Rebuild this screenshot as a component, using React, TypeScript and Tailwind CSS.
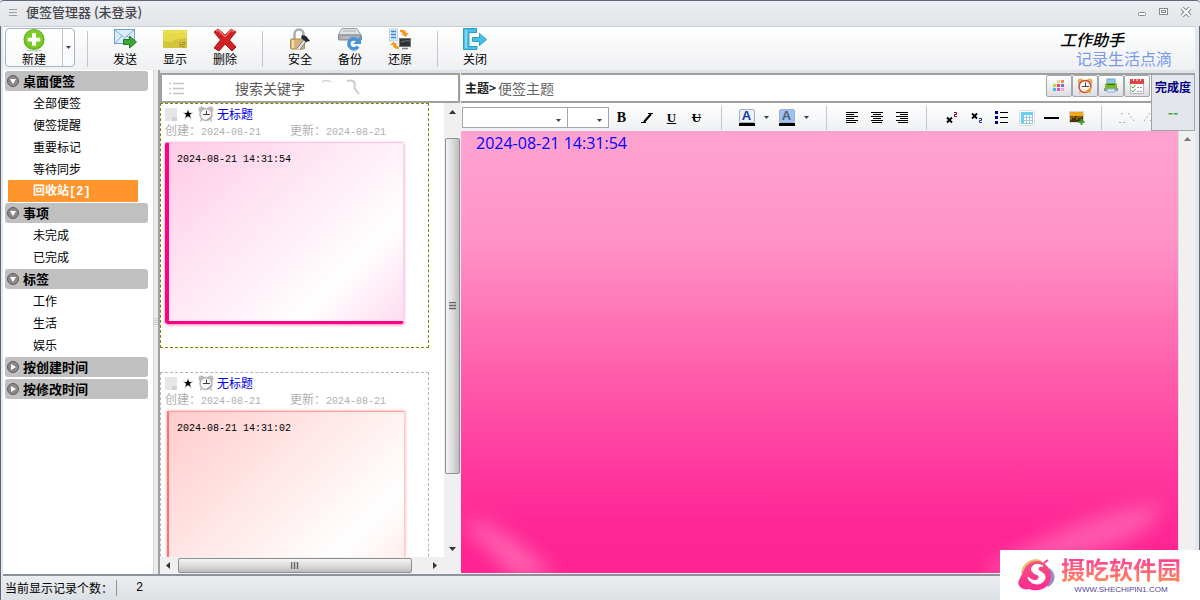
import type { ReactNode } from 'react';

const SIDEBAR = [
  { title: '桌面便签', open: true, items: ['全部便签', '便签提醒', '重要标记', '等待同步', '回收站[2]'] },
  { title: '事项', open: true, items: ['未完成', '已完成'] },
  { title: '标签', open: true, items: ['工作', '生活', '娱乐'] },
  { title: '按创建时间', open: false, items: [] },
  { title: '按修改时间', open: false, items: [] },
];

const NOTES = [
  { time: '2024-08-21 14:31:54', date: '2024-08-21', selected: true },
  { time: '2024-08-21 14:31:02', date: '2024-08-21', selected: false },
];

/* ---------- toolbar icons ---------- */

function AddIcon() {
  return (
    <svg width="24" height="24" viewBox="0 0 24 24">
      <ellipse cx="12" cy="22.500" rx="9" ry="1" fill="#c9ccd0" />
      <circle cx="12" cy="11" r="11" fill="#62b81c" />
      <circle cx="12" cy="10.500" r="9.500" fill="#7ccb2a" />
      <path d="M12 4.500v13M5.500 11h13" stroke="#fff" strokeWidth="4" />
    </svg>
  );
}

function SendIcon() {
  return (
    <svg width="24" height="24" viewBox="0 0 24 24">
      <rect x="1.500" y="1.500" width="20" height="14" fill="#d9ecfb" stroke="#6b9fd6" />
      <path d="M2 2l9.500 8L21 2M2 15l7-7M21 15l-7-7" fill="none" stroke="#7fb0de" />
      <path d="M10.500 11.500h6v-3.500l7 6-7 6v-3.500h-6z" fill="#3fa535" stroke="#1f7a20" />
    </svg>
  );
}

function ShowIcon() {
  return (
    <svg width="24" height="24" viewBox="0 0 24 24">
      <rect y="2" width="24" height="18" fill="#e6da48" />
      <path d="M0 13l8 1 6-3 10-1v10H0z" fill="#d3c43e" />
      <path d="M1 4h22" stroke="#f3ec86" strokeDasharray="2 2" />
      <path d="M17 19v-5M19 14.500h3v2h-3v2.500h3" fill="none" stroke="#a08d26" />
    </svg>
  );
}

function DeleteIcon() {
  return (
    <svg width="24" height="24" viewBox="0 0 24 24">
      <path d="M1 4l4-3 7 6 6-6 5 3-6.500 8 6.500 7-4 4-7-7-6 7-5-3 6.500-8z" fill="#d02222" stroke="#a51717" strokeLinejoin="round" />
      <path d="M3 3.500l2-1.500 7 6.500 6-6.500 3 1.500" fill="none" stroke="#ee7672" strokeWidth="1.500" />
    </svg>
  );
}

function LockIcon() {
  return (
    <svg width="24" height="24" viewBox="0 0 24 24">
      <path d="M6.500 12V6a4.500 4.500 0 0 1 9 0v6" fill="none" stroke="#a9adb2" strokeWidth="2.500" />
      <rect x="2.500" y="11" width="14" height="10" rx="1" fill="#d9b277" stroke="#b28a4e" />
      <path d="M5 12v8" stroke="#f2dcb4" strokeWidth="2" />
      <path d="M10 21l8-10" stroke="#dfe3e6" strokeWidth="4" />
      <path d="M9 20l8-10M12 22l7-10" stroke="#6b6f73" />
      <path d="M14 7l4 1 4 5-4 1-5-4z" fill="#25282b" />
    </svg>
  );
}

function BackupIcon() {
  return (
    <svg width="24" height="24" viewBox="0 0 24 24">
      <path d="M4 .5h15l4 6.500H0z" fill="#dfe2e5" stroke="#999ea3" />
      <rect x=".5" y="7" width="23" height="5" rx="1" fill="#a9aeb3" stroke="#858a90" />
      <path d="M5 3h13M3 9.500h9" stroke="#b9bec3" strokeWidth="1.500" />
      <path d="M20 18.500a5 5 0 1 1-1-6.500" fill="none" stroke="#4a94d8" strokeWidth="3.500" />
      <path d="M23 8v8h-8z" fill="#4a94d8" />
    </svg>
  );
}

function RestoreIcon() {
  return (
    <svg width="24" height="24" viewBox="0 0 24 24">
      <rect x="1.500" y="1" width="8" height="12" fill="#d7e8f8" stroke="#bcd2e8" />
      <path d="M3 3.500h5M3 6.500h5M3 9.500h5" stroke="#4587c4" strokeWidth="1.500" />
      <path d="M12 2q6-1 6 3h2.500L18 9l-5-3h2q-1-2-3-2z" fill="#f59a1b" />
      <path d="M11 21q-6 0-6-4H2l3-3 5 2H8q0 2 3 3z" fill="#f59a1b" />
      <rect x="11.500" y="10.500" width="11" height="8" fill="#2e3135" stroke="#6f757b" />
      <path d="M13 14q5-2 9-1" stroke="#73797f" fill="none" />
      <path d="M14 20.500h6" stroke="#7c8186" strokeWidth="1.500" />
    </svg>
  );
}

function ExitIcon() {
  return (
    <svg width="24" height="24" viewBox="0 0 24 24">
      <path d="M.5.5h13v4H6v14h8v3H.5z" fill="#48bfe3" stroke="#2ba0c6" />
      <path d="M2 2h2v18H2z" fill="#7ddaf2" />
      <path d="M9.500 9.500h7V5.500l7 6-7 6v-4h-7z" fill="#48bfe3" stroke="#2ba0c6" />
    </svg>
  );
}

const TOOLS: { label: string; icon: ReactNode; divider?: boolean }[] = [
  { label: '发送', icon: <SendIcon /> },
  { label: '显示', icon: <ShowIcon /> },
  { label: '删除', icon: <DeleteIcon />, divider: true },
  { label: '安全', icon: <LockIcon /> },
  { label: '备份', icon: <BackupIcon /> },
  { label: '还原', icon: <RestoreIcon />, divider: true },
  { label: '关闭', icon: <ExitIcon /> },
];

/* ---------- small drawings ---------- */

function Caret({ className = '' }: { className?: string }) {
  return (
    <svg width="5" height="3" viewBox="0 0 5 3" className={className}>
      <path d="M0 0h5L2.500 3z" fill="#3c4046" />
    </svg>
  );
}

function AlarmIcon({ gray = false }: { gray?: boolean }) {
  const bell = gray ? '#bdbdbd' : '#e0b45a';
  const ring = gray ? '#b5b5b5' : '#cf4a36';
  return (
    <svg width="16" height="16" viewBox="0 0 16 16">
      <circle cx="3.500" cy="3.500" r="3" fill={bell} />
      <circle cx="12.500" cy="3.500" r="3" fill={bell} />
      <path d="M3.500 13l-1 2.500M12.500 13l1 2.500" stroke={bell} strokeWidth="1.500" />
      <circle cx="8" cy="8.500" r="6" fill="#f7f7f7" stroke={ring} strokeWidth="1.500" />
      <path d="M8.500 4.500v4.500M5 8.500h7" fill="none" stroke="#444" />
      <path d="M9 14l5-4" stroke={gray ? '#888' : '#e8a825'} strokeWidth={gray ? 1 : 2} />
    </svg>
  );
}

function PaletteIcon() {
  return (
    <svg width="16" height="16" viewBox="0 0 16 16">
      <path d="M6 2h3v3H6z" fill="#f0cf9e" />
      <path d="M10 2h3v3h-3z" fill="#e8924c" />
      <path d="M2 6h3v3H2z" fill="#b6d84c" />
      <path d="M6 6h3v3H6z" fill="#ee4a5c" />
      <path d="M10 6h3v3h-3z" fill="#7470e0" />
      <path d="M2 10h3v3H2z" fill="#3fb4f0" />
      <path d="M6 10h3v3H6z" fill="#d455e0" />
      <path d="M10 10h3v3h-3z" fill="#f2a8cc" />
    </svg>
  );
}

function PrinterIcon() {
  return (
    <svg width="16" height="16" viewBox="0 0 16 16">
      <rect x="4" y="1" width="8" height="5" fill="#8ec6f0" stroke="#6aa7d8" />
      <rect x="2" y="5" width="12" height="6" rx="2" fill="#7db52b" />
      <path d="M4 6.500h8" stroke="#3e6d14" />
      <path d="M1 10h14v3H1z" fill="#8f979e" />
      <path d="M2 8h12v3H2z" fill="#7db52b" />
      <path d="M4 11h8v3H4z" fill="#dceefb" stroke="#86b5da" />
    </svg>
  );
}

function CalendarIcon() {
  return (
    <svg width="16" height="16" viewBox="0 0 16 16">
      <rect x="1.500" y="1.500" width="13" height="14" fill="#fff" stroke="#b9b9b9" />
      <path d="M1 1h14v5H1z" fill="#e04545" />
      <path d="M4.500 0v3M8 0v3M11.500 0v3" stroke="#fff" />
      <path d="M2.500 8.500l1.500 1.500 2.500-3M2.500 12.500L4 14l2.500-3" fill="none" stroke="#36a336" />
      <path d="M8 9.500h5M8 13.500h5" stroke="#999" strokeDasharray="2 1" />
    </svg>
  );
}

function Lines({ x }: { x: number[] }) {
  return (
    <svg width="12" height="12" viewBox="0 0 12 12">
      {[12, 8, 12, 8, 12, 10].map((w, i) => (
        <rect key={i} x={x[i]} y={i * 2} width={w} height="1" fill="#000" />
      ))}
    </svg>
  );
}

function LetterBox({ className }: { className: string }) {
  return (
    <span className="block w-4 border-b-[3px] border-black">
      <span className={`block rounded-[2px] border border-[#9fb0c6] text-center font-[Liberation_Sans,sans-serif] text-[13px] leading-3 font-bold ${className}`}>
        A
      </span>
    </span>
  );
}

function Script({ sup }: { sup: boolean }) {
  return (
    <svg width="12" height="12" viewBox="0 0 12 12">
      <path d={sup ? 'M1 5.500l5 5M6 5.500l-5 5' : 'M1 1.500l5 5M6 1.500l-5 5'} stroke="#000" strokeWidth="1.800" />
      <path d={sup ? 'M8 .5h2.500v2h-2v2H11' : 'M8 6.500h2.500v2h-2v2H11'} fill="none" stroke={sup ? '#8b0020' : '#1c2fae'} />
    </svg>
  );
}

function BulletIcon() {
  return (
    <svg width="14" height="14" viewBox="0 0 14 14">
      <path d="M0 0h3v3H0zM0 5h3v3H0zM0 10h3v3H0z" fill="#000080" />
      <path d="M5 1.500h8M5 6.500h8M5 11.500h8" stroke="#000" />
    </svg>
  );
}

function TableIcon() {
  return (
    <svg width="16" height="16" viewBox="0 0 16 16">
      <rect x=".5" y=".5" width="15" height="15" rx="1" fill="#fff" stroke="#d3dde3" />
      <path d="M2 2h12v3H2zM2 5h3v9H2z" fill="#67d0f3" />
      <path d="M5 7.500h9M5 10.500h9M2 13.500h12M7.500 5v9M10.500 5v9M13.500 5v9" stroke="#9fc5d8" />
    </svg>
  );
}

function PictureIcon() {
  return (
    <svg width="16" height="16" viewBox="0 0 16 16">
      <rect x=".5" y="1.500" width="14" height="11" fill="#4b3310" stroke="#d5d5d5" />
      <path d="M1 2h13v4H1z" fill="#f3a51c" />
      <path d="M2 10V7h4M8 10V7h5" fill="none" stroke="#c08a1c" />
      <path d="M12.500 9v6M9.500 12h6" stroke="#3ca02b" strokeWidth="2" />
    </svg>
  );
}

function Fmt({ label, children }: { label: string; children: ReactNode }) {
  return (
    <button type="button" aria-label={label} className="flex h-6 w-[25px] shrink-0 items-center justify-center">
      {children}
    </button>
  );
}

function Divider({ className = 'h-6' }: { className?: string }) {
  return (
    <div className="flex w-[25px] shrink-0 items-center justify-center">
      <div className={`w-px bg-[#c3c7cd] ${className}`}></div>
    </div>
  );
}

/* ---------- frame ---------- */

function TitleBar() {
  return (
    <header className="flex h-[26px] shrink-0 items-center rounded-t border-t border-[#5f6a78] bg-linear-to-b from-[#eceef1] to-[#e2e5e9] pr-2 pb-[3px] pl-[9px]">
      <svg width="8" height="7" viewBox="0 0 8 7" className="mr-[9px]">
        <path d="M0 .5h8M0 3.500h8M0 6.500h8" stroke="#9a9da1" />
      </svg>
      <h1 className="flex-1 text-[13px] leading-5 font-medium text-[#44464b]">便签管理器 (未登录)</h1>
      <div className="flex items-center gap-3">
        <button type="button" aria-label="最小化">
          <svg width="9" height="9" viewBox="0 0 9 9"><rect x=".5" y="4.500" width="7" height="3" rx="1" fill="#fff" stroke="#85888c" /></svg>
        </button>
        <button type="button" aria-label="最大化">
          <svg width="9" height="8" viewBox="0 0 9 8"><rect x=".5" y=".5" width="8" height="6" fill="#fff" stroke="#85888c" /><rect x="2.500" y="2.500" width="4" height="2" fill="#fff" stroke="#85888c" /></svg>
        </button>
        <button type="button" aria-label="关闭窗口">
          <svg width="12" height="10" viewBox="0 0 12 10"><path d="M2 1l8 8M10 1L2 9" stroke="#85888c" strokeWidth="4" /><path d="M2 1l8 8M10 1L2 9" stroke="#fff" strokeWidth="2" /></svg>
        </button>
      </div>
    </header>
  );
}

function Toolbar() {
  return (
    <div className="flex h-11 shrink-0 border-t border-[#c9ced4] bg-linear-to-b from-white to-[#eff0f2] pl-0.5">
      <div className="mt-px flex h-[39px] w-[70px] rounded-sm border border-[#a7b4c6] bg-white/50">
        <button type="button" className="flex w-[57px] flex-col items-center border-r border-[#b9c3d0] text-xs leading-[14px]">
          <AddIcon />
          新建
        </button>
        <button type="button" aria-label="新建选项" className="flex flex-1 items-center justify-center">
          <Caret />
        </button>
      </div>
      <Divider className="h-9" />
      {TOOLS.map((tool) => (
        <div key={tool.label} className="flex">
          <button type="button" className="flex w-[50px] flex-col items-center pt-px text-xs leading-[14px]">
            {tool.icon}
            {tool.label}
          </button>
          {tool.divider && <Divider className="h-9" />}
        </div>
      ))}
      <div className="flex-1"></div>
      <div className="mr-[23px] flex flex-col pt-1 font-[Liberation_Sans,Noto_Sans_CJK_SC,sans-serif]">
        <span className="-ml-4 text-base leading-[19px] font-medium text-black italic">工作助手</span>
        <span className="text-base leading-[19px] text-[#7b9be8]">记录生活点滴</span>
      </div>
    </div>
  );
}

function Sidebar() {
  return (
    <nav className="w-[150px] shrink-0 bg-white">
      {SIDEBAR.map((group) => (
        <section key={group.title} className="flex flex-col">
          <button type="button" className="my-px ml-0.5 flex h-5 w-[143px] items-center rounded-[3px] bg-[#c0c0c0] pl-0.5 text-[13px] font-bold">
            <svg width="12" height="12" viewBox="0 0 12 12" className="mr-1 shrink-0">
              <circle cx="6" cy="6" r="5.500" fill="#8a8a8a" stroke="#5d5d5d" />
              <path d={group.open ? 'M3 4h6L6 9z' : 'M4 3v6l5-3z'} fill="#fff" />
            </svg>
            {group.title}
          </button>
          {group.items.map((item) =>
            item.startsWith('回收站') ? (
              <a key={item} href="#" className="ml-[5px] block h-[22px] w-[130px] bg-[#ff962d] pl-[25px] font-[Liberation_Mono,Noto_Sans_CJK_SC,monospace] text-xs leading-6 font-bold text-white">
                {item}
              </a>
            ) : (
              <a key={item} href="#" className="ml-[5px] block h-[22px] w-[130px] pl-[25px] text-xs leading-[22px]">
                {item}
              </a>
            )
          )}
        </section>
      ))}
    </nav>
  );
}

function NoteCard({ note }: { note: (typeof NOTES)[number] }) {
  return (
    <article className={`h-[245px] w-[269px] shrink-0 border border-dashed pl-1 ${note.selected ? 'border-[#808000]' : 'border-[#b4b4b4]'}`}>
      <div className="flex h-5 items-center text-xs">
        <svg width="13" height="13" viewBox="0 0 13 13" className="mr-1">
          <rect width="12" height="13" fill="#e6e6e6" />
          <path d="M7 9h5v4H7z" fill="#d2d2d2" />
        </svg>
        <svg width="12" height="12" viewBox="0 0 11 11" className="mr-1">
          <path d="M5.500 0l1.300 4H11L7.700 6.500 9 11 5.500 8.300 2 11l1.300-4.500L0 4h4.200z" fill="#cfcfcf" />
          <path d="M5.500 2l1 2.500H9L7 6.300 8 9 5.500 7.300 3 9l1-2.700-2-1.800h2.500z" fill="#000" />
        </svg>
        <AlarmIcon gray />
        <a href="#" className="ml-[3px] text-[#0000e6]">无标题</a>
      </div>
      <div className="flex h-[13px] items-center text-xs leading-[13px] text-[#b0b0b0]">
        <span className="w-[125px]">创建：<span className="font-[Liberation_Mono,monospace] text-[10px]">{note.date}</span></span>
        <span>更新：<span className="font-[Liberation_Mono,monospace] text-[10px]">{note.date}</span></span>
      </div>
      {note.selected ? (
        <div className="mt-[5px] h-[182px] w-[239px] rounded-[3px] border-t border-r border-b-[3px] border-l-4 border-[#ff0080] border-t-[#ffc4e2] border-r-[#ffd0e8] bg-linear-135 from-[#ffcbe6] via-white via-75% to-[#ffdcef] px-2 py-[9px] font-[Liberation_Mono,monospace] text-[10px] shadow-[0_1px_3px_#ff7dbe]">
          {note.time}
        </div>
      ) : (
        <div className="mt-[5px] ml-0.5 h-[182px] w-[238px] border border-l-2 border-[#ff9c9c] border-r-[#ffc8c8] border-l-[#ff7070] bg-linear-135 from-[#ffcccc] via-white via-75% to-[#ffe4e4] px-2 py-[9px] font-[Liberation_Mono,monospace] text-[10px] shadow-[0_0_3px_#ff9a9a]">
          {note.time}
        </div>
      )}
    </article>
  );
}

function NoteList() {
  return (
    <section className="flex w-[300px] shrink-0 flex-col bg-[#f0f0f0]">
      <div className="flex h-[30px] shrink-0 items-center border-2 border-[#a0a0a0] bg-white">
        <svg width="15" height="13" viewBox="0 0 15 13" className="ml-[7px]">
          <path d="M0 1.500h2M0 6.500h2M0 11.500h2M4 1.500h11M4 6.500h11M4 11.500h11" stroke="#c4c4c4" strokeWidth="1.500" />
        </svg>
        <input aria-label="搜索" placeholder="搜索关键字" className="ml-[51px] w-20 text-sm outline-none placeholder:text-[#5a5a5a]" />
        <svg width="42" height="18" viewBox="0 0 42 18" className="ml-1.5">
          <path d="M1 3q5-3 9 0" fill="none" stroke="#d0d0d0" strokeWidth="1.500" />
          <path d="M26 2q7-2 8 3-1 4 0 5l4 5" fill="none" stroke="#cdcdcd" strokeWidth="2" />
        </svg>
      </div>
      <div className="flex min-h-0 flex-1">
        <div className="flex min-w-0 flex-1 flex-col">
          <div className="flex min-h-0 flex-1 flex-col gap-6 overflow-hidden bg-white">
            {NOTES.map((note) => <NoteCard key={note.time} note={note} />)}
          </div>
          <div className="flex h-[17px] shrink-0 items-center">
            <svg width="18" height="7" viewBox="0 0 18 7" className="shrink-0"><path d="M10 0v7L6 3.500z" fill="#333" /></svg>
            <div className="flex h-[15px] w-[234px] items-center justify-center rounded-[2px] border border-[#8f8f8f] bg-linear-to-b from-[#f4f4f4] via-[#dcdcdc] to-[#bdbdbd]">
              <svg width="8" height="7" viewBox="0 0 8 7"><path d="M.5 0v7M3.500 0v7M6.500 0v7" stroke="#666" strokeWidth="1.500" /></svg>
            </div>
            <svg width="18" height="7" viewBox="0 0 18 7" className="ml-3 shrink-0"><path d="M9 0v7l4-3.500z" fill="#333" /></svg>
          </div>
        </div>
        <div className="flex w-4 shrink-0 flex-col items-center">
          <svg width="7" height="35" viewBox="0 0 7 35" className="shrink-0"><path d="M0 11h7L3.500 7z" fill="#333" /></svg>
          <div className="flex h-[336px] w-[15px] items-center justify-center rounded-[2px] border border-[#8f8f8f] bg-linear-to-r from-[#f4f4f4] via-[#dcdcdc] to-[#bdbdbd]">
            <svg width="7" height="8" viewBox="0 0 7 8"><path d="M0 .5h7M0 3.500h7M0 6.500h7" stroke="#666" strokeWidth="1.500" /></svg>
          </div>
          <div className="flex-1"></div>
          <svg width="7" height="30" viewBox="0 0 7 30" className="shrink-0"><path d="M0 3h7L3.500 7z" fill="#333" /></svg>
        </div>
      </div>
    </section>
  );
}

function FormatBar() {
  return (
    <div className="flex h-7 shrink-0 items-center overflow-hidden bg-linear-to-b from-white to-[#eef0f2] pt-px pl-px">
      {[
        { label: '字体', cls: 'w-[106px]' },
        { label: '字号', cls: 'w-[42px]' },
      ].map((box) => (
        <div key={box.label} className={`-ml-px grid h-[21px] shrink-0 items-center border border-[#a3a7ac] bg-white first:ml-0 ${box.cls}`}>
          <select aria-label={box.label} className="col-start-1 row-start-1 h-full w-full appearance-none outline-none"></select>
          <Caret className="col-start-1 row-start-1 mr-1.5 justify-self-end" />
        </div>
      ))}
      <Fmt label="粗体"><b className="font-[Liberation_Serif,serif] text-sm">B</b></Fmt>
      <Fmt label="斜体">
        <svg width="12" height="10" viewBox="0 0 12 10"><path d="M7 .5h5M0 9.500h5" stroke="#000" /><path d="M10 1L3 9" stroke="#000" strokeWidth="2" /></svg>
      </Fmt>
      <Fmt label="下划线"><span className="font-[Liberation_Serif,serif] text-[13px] font-bold underline">U</span></Fmt>
      <Fmt label="删除线"><span className="font-[Liberation_Serif,serif] text-[13px] font-bold line-through">U</span></Fmt>
      <Divider />
      <Fmt label="文字颜色"><LetterBox className="bg-[#f0f1f4] text-[#0a3ca8]" /></Fmt>
      <button type="button" aria-label="更多文字颜色" className="flex w-[15px] shrink-0 justify-center"><Caret /></button>
      <Fmt label="背景颜色"><LetterBox className="bg-[#9cc3f3] text-[#55606e]" /></Fmt>
      <button type="button" aria-label="更多背景颜色" className="flex w-[15px] shrink-0 justify-center"><Caret /></button>
      <Divider />
      <Fmt label="左对齐"><Lines x={[0, 0, 0, 0, 0, 0]} /></Fmt>
      <Fmt label="居中"><Lines x={[0, 2, 0, 2, 0, 1]} /></Fmt>
      <Fmt label="右对齐"><Lines x={[0, 4, 0, 4, 0, 2]} /></Fmt>
      <Divider />
      <Fmt label="上标"><Script sup /></Fmt>
      <Fmt label="下标"><Script sup={false} /></Fmt>
      <Fmt label="列表"><BulletIcon /></Fmt>
      <Fmt label="表格"><TableIcon /></Fmt>
      <Fmt label="分隔线"><svg width="15" height="2"><path d="M0 1h15" stroke="#000" strokeWidth="2" /></svg></Fmt>
      <Fmt label="图片"><PictureIcon /></Fmt>
      <Divider />
      <Fmt label="撤销">
        <svg width="16" height="12" viewBox="0 0 16 12"><path d="M0 10.500h6M2 2l4-1M9 1l6 8" stroke="#aaa" strokeDasharray="2 2" fill="none" /></svg>
      </Fmt>
      <Fmt label="重做">
        <svg width="16" height="12" viewBox="0 0 16 12"><path d="M0 9l6-8M6 9l4-4" stroke="#aaa" strokeDasharray="2 2" fill="none" /></svg>
      </Fmt>
    </div>
  );
}

function Editor() {
  const actions = [
    { label: '颜色', icon: <PaletteIcon /> },
    { label: '提醒', icon: <AlarmIcon /> },
    { label: '打印', icon: <PrinterIcon /> },
    { label: '日程', icon: <CalendarIcon /> },
  ];
  return (
    <section className="flex min-w-0 flex-1 flex-col bg-[#f0f0f0] pl-px">
      <div className="flex h-[58px] shrink-0">
        <div className="flex min-w-0 flex-1 flex-col">
          <div className="flex h-[30px] shrink-0 items-center border-y-2 border-[#a0a0a0] bg-white pr-px pl-1">
            <label htmlFor="topic" className="mr-0.5 text-xs font-bold text-[#222]">主题&gt;</label>
            <input id="topic" placeholder="便签主题" className="min-w-0 flex-1 text-sm outline-none placeholder:text-[#666]" />
            <div className="flex self-start">
              {actions.map((action) => (
                <button key={action.label} type="button" aria-label={action.label} className="flex h-[22px] w-[26px] items-center justify-center rounded-[2px] border border-[#a3a8ae] bg-linear-to-b from-white to-[#dcdee2]">
                  {action.icon}
                </button>
              ))}
            </div>
          </div>
          <FormatBar />
        </div>
        <div className="flex w-11 shrink-0 flex-col items-center border border-t-2 border-[#a0a4a9] bg-[#e3e7eb] pt-[3px] text-[#000080]">
          <span className="text-xs leading-[18px] font-bold whitespace-nowrap">完成度</span>
          <span className="mt-[7px] text-sm leading-[18px] font-bold text-[#3ba53b]">--</span>
        </div>
      </div>
      <div className="flex min-h-0 flex-1 pb-px">
        <div className="grid min-w-0 flex-1">
          <svg className="col-start-1 row-start-1 h-full w-full" viewBox="0 0 716 442" preserveAspectRatio="none">
            <defs>
              <linearGradient id="paper" x1="0" y1="0" x2="0" y2="1">
                <stop offset="0" stopColor="#ffa3d0" />
                <stop offset=".25" stopColor="#ff93c6" />
                <stop offset=".5" stopColor="#ff66b0" />
                <stop offset=".75" stopColor="#ff3a9e" />
                <stop offset=".9" stopColor="#ff2694" />
                <stop offset="1" stopColor="#ff2392" />
              </linearGradient>
              <filter id="soft" x="-30%" y="-60%" width="160%" height="220%"><feGaussianBlur stdDeviation="10" /></filter>
            </defs>
            <path d="M0 0h716v442H0z" fill="url(#paper)" />
            <path d="M10 388q40 12 85 58H50Q30 415 5 400z" fill="#ff8cc4" opacity=".6" filter="url(#soft)" />
            <path d="M520 442Q610 385 700 372q-5 34-80 52-60 14-80 22z" fill="#ff7fbf" opacity=".6" filter="url(#soft)" />
          </svg>
          <textarea aria-label="便签内容" defaultValue="2024-08-21 14:31:54" className="col-start-1 row-start-1 h-full w-full resize-none bg-transparent pl-[15px] font-[Open_Sans,sans-serif] text-base leading-6 text-[#0000ff] outline-none" />
        </div>
        <div className="flex w-[17px] shrink-0 justify-center border-l border-[#dcdcdc] pt-1.5">
          <svg width="7" height="4" viewBox="0 0 7 4"><path d="M0 4h7L3.500 0z" fill="#777" /></svg>
        </div>
      </div>
    </section>
  );
}

function Watermark() {
  return (
    <aside className="absolute right-0 bottom-0 flex h-[50px] w-[200px] items-center bg-white pl-[17px]">
      <svg width="40" height="34" viewBox="0 0 40 34" className="mr-1">
        <defs>
          <linearGradient id="badge" x1="0" y1="0" x2="0" y2="1">
            <stop offset="0" stopColor="#f3527f" />
            <stop offset="1" stopColor="#ff2a92" />
          </linearGradient>
        </defs>
        <path d="M4 15C5 4 17-2 25 3L13 17z" fill="#e7bb72" />
        <path d="M32 10c8 5 7 15-1 19l-6-8z" fill="#9a8ac8" />
        <path d="M6 14C10 3 22 0 28 6c8 7 7 16 2 22-5 5-13 5-18 3-7 2-13-4-10-9z" fill="url(#badge)" />
        <path d="M26 8c-7-4-13 0-11 5 2 4 8 3 7 7-1 3-6 4-11-1 1 8 15 10 17 1 1-6-7-6-7-9 0-2 3-3 5-3z" fill="#fff" stroke="#fff" />
        <path d="M27 5l4-3" stroke="#ff3c8c" strokeWidth="2" />
      </svg>
      <div className="flex flex-col items-center font-[Liberation_Sans,Noto_Sans_CJK_SC,sans-serif]">
        <span className="bg-linear-to-b from-[#ff2f96] to-[#ff8a4a] bg-clip-text text-2xl leading-[29px] font-bold text-transparent">摄吃软件园</span>
        <span className="text-[8px] leading-[10px] text-[#54459c]">WWW.SHECHIPIN1.COM</span>
      </div>
    </aside>
  );
}

export default function App() {
  return (
    <div lang="zh-CN" className="relative flex h-screen flex-col overflow-hidden bg-[#e4e8ec] font-[Noto_Sans_CJK_SC,sans-serif] text-black">
      <TitleBar />
      <div className="flex min-h-0 flex-1 flex-col border-r border-l border-[#5f6a78] pr-1 pl-0.5">
        <Toolbar />
        <main className="flex min-h-0 flex-1 border-b-2 border-[#8d9298]">
          <Sidebar />
          <div className="flex w-[7px] shrink-0 items-center border-r-2 border-l border-r-[#a0a0a0] border-l-[#d5d8dc] bg-[#eaedf0]">
            <svg width="4" height="8" viewBox="0 0 4 8"><path d="M1 0v8M3 0v8" stroke="#a9adb3" strokeDasharray="1 1" /></svg>
          </div>
          <div className="flex min-w-0 flex-1 border-t-[3px] border-[#dfe2e6]">
            <NoteList />
            <Editor />
          </div>
        </main>
        <footer className="flex h-6 shrink-0 items-center bg-linear-to-b from-[#eceef1] to-[#dbe0e4] text-xs">
          <span className="w-[114px] border-r border-[#8d9298] pl-0.5">当前显示记录个数：</span>
          <span className="pl-[19px] font-[Liberation_Mono,monospace]">2</span>
        </footer>
      </div>
      <Watermark />
    </div>
  );
}
